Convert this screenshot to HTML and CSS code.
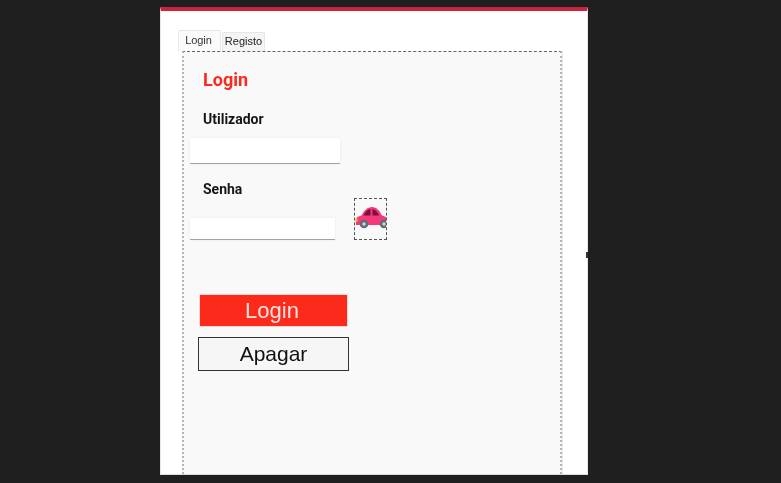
FILE: index.html
```html
<!DOCTYPE html>
<html lang="pt">
<head>
<meta charset="utf-8">
<title>Login</title>
<link rel="stylesheet" href="styles.css">
</head>
<body>
<main class="sheet">
  <nav class="tabs">
    <span class="tab tab-active">Login</span>
    <span class="tab">Registo</span>
  </nav>
  <section class="panel">
    <h1 class="title">Login</h1>
    <label class="label label-user" for="user">Utilizador</label>
    <input class="field field-user" id="user" type="text">
    <label class="label label-pass" for="pass">Senha</label>
    <div class="pass-row">
      <input class="field field-pass" id="pass" type="password">
      <div class="captcha">
        <svg class="car" viewBox="0 0 32 23" width="32" height="23" aria-hidden="true">
          <path fill="#f5397b" d="M1 14c0-2.500 2-3.800 5.500-4.500C9 4.500 12.500 1 17 1c4.500 0 7.500 3.500 10 8.500 3 .5 5 2 5 4.500V19H1z"/>
          <path fill="#7d0f3f" d="M8.500 9.500c1.500-3.300 3.800-6 7-6.500V9.500zM17.500 3c3 .4 5.200 3.300 6.800 6.500H17.500z"/>
          <rect x="0" y="12.500" width="2.500" height="3" fill="#f6c33b"/>
          <circle cx="9" cy="18" r="4.300" fill="#5f6b75"/>
          <circle cx="9" cy="18" r="1.800" fill="#c9d1d6"/>
          <circle cx="29" cy="18" r="4.300" fill="#5f6b75"/>
          <circle cx="29" cy="18" r="1.800" fill="#c9d1d6"/>
        </svg>
      </div>
    </div>
    <button class="btn btn-login" type="button">Login</button>
    <button class="btn btn-clear" type="button">Apagar</button>
  </section>
  <span class="edge-mark"></span>
</main>
</body>
</html>
```
FILE: styles.css
```css
* { box-sizing: border-box; }
html, body { margin: 0; height: 100%; }
body {
  background: #1f1f1f;
  font-family: "Liberation Sans", Arial, sans-serif;
  overflow: hidden;
}
.sheet {
  position: relative;
  width: 428px;
  height: 468px;
  margin: 7px 0 0 160px;
  background: #fff;
  border-top: 4px solid #c9233f;
  border-left: 1px solid #e6e6e6;
  border-right: 1px solid #e6e6e6;
  border-bottom: 1px solid #dcdcdc;
  padding: 19px 0 0 17px;
  filter: blur(0.35px);
}
.edge-mark {
  position: absolute;
  right: -1px;
  top: 241px;
  width: 2px;
  height: 6px;
  background: #333;
}
.tabs {
  display: flex;
  align-items: flex-end;
  gap: 1px;
  height: 21px;
}
.tab {
  height: 19px;
  width: 43px;
  background: #f4f4f4;
  border: 1px solid #e6e6e6;
  border-bottom: 0;
  border-radius: 2px 2px 0 0;
  font-size: 11px;
  line-height: 17px;
  text-align: center;
  color: #222;
}
.tab-active {
  height: 21px;
  background: #fafafa;
  line-height: 18px;
  letter-spacing: -0.1px;
  padding-right: 2px;
  color: #333;
}
.panel {
  width: 380px;
  height: 423px;
  margin-left: 4px;
  background: #f9f9f9;
  border-top: 1px dashed #666;
  border-left: 2px dotted #b5b5b5;
  border-right: 2px dotted #b5b5b5;
  box-shadow: 1px 0 0 #e8e8e8;
  display: flex;
  flex-direction: column;
  align-items: flex-start;
}
.title {
  margin: 18px 0 0 19px;
  font-family: Roboto, "Liberation Sans", sans-serif;
  font-size: 18px;
  line-height: 20px;
  font-weight: 700;
  color: #fb2a1c;
}
.label {
  margin-left: 19px;
  font-family: Roboto, "Liberation Sans", sans-serif;
  font-size: 14px;
  line-height: 18px;
  font-weight: 700;
  color: #161616;
}
.label-user { margin-top: 20px; }
.label-pass { margin-top: 16px; }
.field {
  display: block;
  margin-left: 6px;
  background: #fff;
  border: 0;
  border-bottom: 1px solid #a3a3a3;
  box-shadow: 0 0 2px #e5e5e5;
  padding: 0;
  outline: 0;
}
.field-user { width: 150px; height: 26px; margin-top: 10px; }
.pass-row {
  display: flex;
  align-items: flex-end;
}
.field-pass { width: 145px; height: 22px; }
.captcha {
  width: 33px;
  height: 42px;
  margin-left: 19px;
  border: 1px dashed #555;
  padding-top: 7px;
  overflow: hidden;
}
.car { display: block; }
.btn {
  display: block;
  font-family: inherit;
  padding: 0;
  text-align: center;
}
.btn-login {
  width: 149px;
  height: 33px;
  margin: 54px 0 0 15px;
  padding-right: 3px;
  background: #fb2a1a;
  border: 1px solid #fbd8d4;
  font-size: 22px;
  color: #fde4e0;
}
.btn-clear {
  width: 151px;
  height: 34px;
  margin: 10px 0 0 14px;
  background: #f6f6f6;
  border: 1px solid #333;
  font-size: 21px;
  color: #111;
}
```
